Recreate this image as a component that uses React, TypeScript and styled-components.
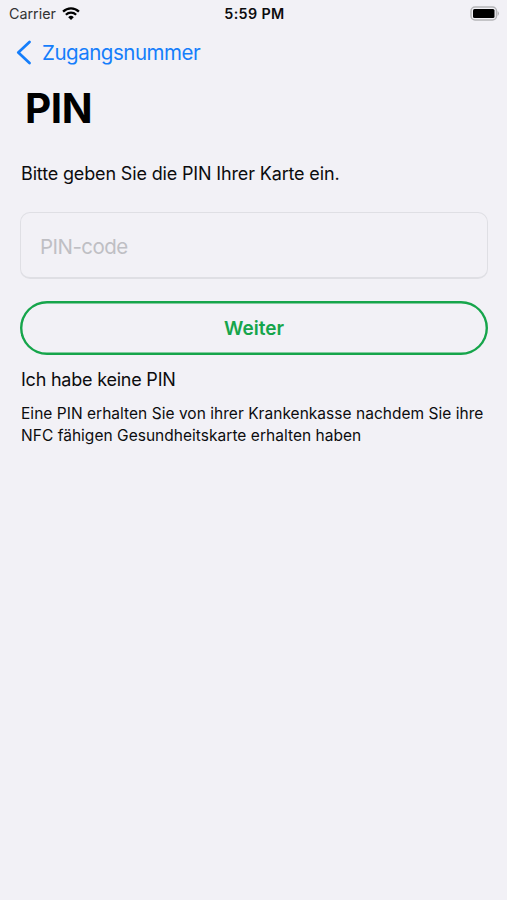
import React from 'react';
import styled, { createGlobalStyle } from 'styled-components';

const GlobalStyle = createGlobalStyle`
  * { box-sizing: border-box; }
  body { margin: 0; background: #f2f1f6; font-family: Inter, sans-serif; color: #0c0c0e; }
`;

const Screen = styled.div`
  width: 507px;
  height: 900px;
  background: #f2f1f6;
  overflow: hidden;
`;

const StatusBar = styled.div`
  display: grid;
  grid-template-columns: 1fr auto 1fr;
  align-items: center;
  height: 27px;
  padding: 0 7px 0 9px;
`;

const Carrier = styled.div`
  display: flex;
  align-items: center;
  gap: 6px;
  font-size: 14.3px;
  color: #333;
`;

const Time = styled.div`
  font-size: 14.3px;
  font-weight: 600;
  letter-spacing: 0.38px;
`;

const BatterySlot = styled.div`
  display: flex;
  justify-content: flex-end;
`;

const BackLink = styled.a`
  display: flex;
  align-items: center;
  gap: 11px;
  height: 50px;
  padding-left: 16px;
  font-size: 20.5px;
  letter-spacing: -0.47px;
  color: #157efb;
`;

const Title = styled.h1`
  margin: 7px 0 0 25px;
  font-size: 40.5px;
  line-height: 50px;
  font-weight: 700;
  letter-spacing: -0.4px;
  color: #000;
`;

const Content = styled.main`
  padding: 28px 19px 0 20px;
`;

const Prompt = styled.p`
  margin: 0 0 26px 1px;
  font-size: 18px;
  line-height: 24px;
  letter-spacing: -0.15px;
`;

const PinInput = styled.input`
  display: block;
  width: 100%;
  height: 67px;
  padding: 2px 19px 0;
  border: 1px solid #dfdfe4;
  border-bottom-width: 2px;
  border-radius: 10px;
  background: transparent;
  font: 20.5px Inter, sans-serif;
  letter-spacing: -0.55px;
  &::placeholder { color: #bfbfc4; opacity: 1; }
`;

const NextButton = styled.button`
  display: block;
  width: 100%;
  height: 54px;
  margin-top: 22px;
  padding: 0;
  border: 0;
  border-radius: 27px;
  box-shadow: inset 0 0 0 2.4px #16a54b;
  background: transparent;
  color: #16a54b;
  font: 600 19px Inter, sans-serif;
`;

const HelpTitle = styled.h2`
  margin: 13px 0 0 1px;
  font-size: 18px;
  line-height: 24px;
  font-weight: 400;
  letter-spacing: -0.22px;
`;

const HelpText = styled.p`
  margin: 11px 0 0 1px;
  font-size: 15.5px;
  line-height: 22px;
  letter-spacing: 0.03px;
  white-space: nowrap;
`;

export default function App() {
  return (
    <Screen>
      <GlobalStyle />
      <StatusBar>
        <Carrier>
          <span>Carrier</span>
          <svg width="18" height="14" viewBox="0 0 20 15">
            <path d="M1.2 4.9a12.6 12.6 0 0 1 17.6 0M4.3 8.4a8.2 8.2 0 0 1 11.4 0" fill="none" stroke="#000" strokeWidth="2.5" />
            <path d="M10 14.2l-3.1-3.2a4.5 4.5 0 0 1 6.2 0z" />
          </svg>
        </Carrier>
        <Time>5:59 PM</Time>
        <BatterySlot>
          <svg width="30" height="15" viewBox="0 0 30 15">
            <rect x="1" y="1" width="25.5" height="13" rx="4" fill="none" stroke="#b5b5b8" strokeWidth="1.5" />
            <rect x="3" y="3" width="21.5" height="9" rx="1.5" />
            <path d="M27.7 5q2.4 2.5 0 5z" fill="#aaaaad" />
          </svg>
        </BatterySlot>
      </StatusBar>
      <BackLink>
        <svg width="15" height="25" viewBox="0 0 15 25">
          <path d="M13.5 2L2.3 12.5 13.5 23" fill="none" stroke="currentColor" strokeWidth="2.7" strokeLinecap="round" strokeLinejoin="round" />
        </svg>
        <span>Zugangsnummer</span>
      </BackLink>
      <Title>PIN</Title>
      <Content>
        <Prompt>Bitte geben Sie die PIN Ihrer Karte ein.</Prompt>
        <PinInput placeholder="PIN-code" />
        <NextButton>Weiter</NextButton>
        <HelpTitle>Ich habe keine PIN</HelpTitle>
        <HelpText>
          Eine PIN erhalten Sie von ihrer Krankenkasse nachdem Sie ihre<br />
          NFC fähigen Gesundheitskarte erhalten haben
        </HelpText>
      </Content>
    </Screen>
  );
}
